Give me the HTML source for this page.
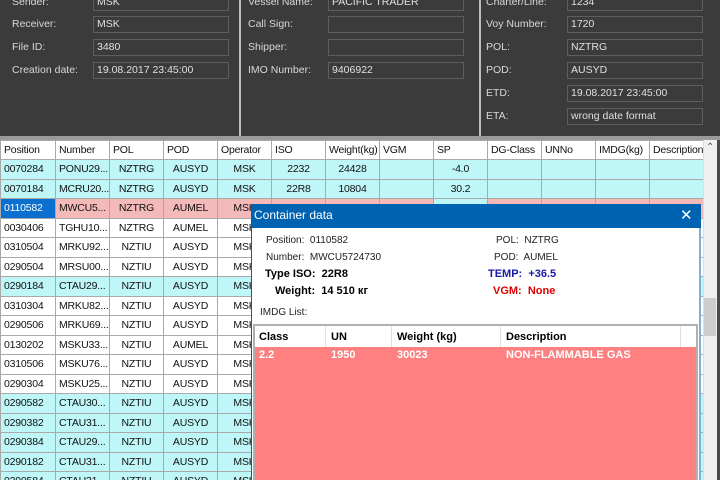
<!DOCTYPE html>
<html><head><meta charset="utf-8"><style>
*{margin:0;padding:0;box-sizing:border-box}
body{width:720px;height:480px;overflow:hidden;background:#3b3b3b;font-family:"Liberation Sans",Arial,sans-serif;font-size:11px;position:relative}
.a{position:absolute}
.lb{position:absolute;color:#d8d8d8;font-size:10.5px}
.in{position:absolute;border:1px solid #5e5e5e;height:17px;color:#e0e0e0;padding-left:3px;line-height:14px;font-size:10.5px}
table{border-collapse:collapse;table-layout:fixed}
#g td{border:1px solid #a9a9a9;height:19.5px;padding:0 3px;white-space:nowrap;overflow:hidden;color:#111;font-size:10.5px;letter-spacing:-0.2px}
#g tr.h td{background:#fff;height:19px}
.c td{background:#bff7f8}
.p td{background:#f4b9b9}
.w td{background:#fff}
.ct{text-align:center}.r{text-align:right}
</style></head><body>
<div class="a" style="left:239px;top:0;width:2px;height:137px;background:#bdbdbd"></div>
<div class="a" style="left:479px;top:0;width:2px;height:137px;background:#bdbdbd"></div>
<div class="a" style="left:0;top:136px;width:720px;height:4px;background:#9a9a9a"></div>

<div class="lb" style="left:12px;top:-4px">Sender:</div><div class="in" style="left:93px;top:-6px;width:136px">MSK</div>
<div class="lb" style="left:12px;top:18px">Receiver:</div><div class="in" style="left:93px;top:16px;width:136px">MSK</div>
<div class="lb" style="left:12px;top:41px">File ID:</div><div class="in" style="left:93px;top:39px;width:136px">3480</div>
<div class="lb" style="left:12px;top:64px">Creation date:</div><div class="in" style="left:93px;top:62px;width:136px">19.08.2017 23:45:00</div>

<div class="lb" style="left:248px;top:-4px">Vessel Name:</div><div class="in" style="left:328px;top:-6px;width:136px">PACIFIC TRADER</div>
<div class="lb" style="left:248px;top:18px">Call Sign:</div><div class="in" style="left:328px;top:16px;width:136px"></div>
<div class="lb" style="left:248px;top:41px">Shipper:</div><div class="in" style="left:328px;top:39px;width:136px"></div>
<div class="lb" style="left:248px;top:64px">IMO Number:</div><div class="in" style="left:328px;top:62px;width:136px">9406922</div>

<div class="lb" style="left:486px;top:-4px">Charter/Line:</div><div class="in" style="left:567px;top:-6px;width:136px">1234</div>
<div class="lb" style="left:486px;top:18px">Voy Number:</div><div class="in" style="left:567px;top:16px;width:136px">1720</div>
<div class="lb" style="left:486px;top:41px">POL:</div><div class="in" style="left:567px;top:39px;width:136px">NZTRG</div>
<div class="lb" style="left:486px;top:64px">POD:</div><div class="in" style="left:567px;top:62px;width:136px">AUSYD</div>
<div class="lb" style="left:486px;top:87px">ETD:</div><div class="in" style="left:567px;top:85px;width:136px">19.08.2017 23:45:00</div>
<div class="lb" style="left:486px;top:110px">ETA:</div><div class="in" style="left:567px;top:108px;width:136px">wrong date format</div>

<div class="a" style="left:0;top:140px;width:717px;height:340px;background:#fff;overflow:hidden">
<table id="g" style="width:703px">
<colgroup><col style="width:55px"><col style="width:54px"><col style="width:54px"><col style="width:54px"><col style="width:54px"><col style="width:54px"><col style="width:54px"><col style="width:54px"><col style="width:54px"><col style="width:54px"><col style="width:54px"><col style="width:54px"><col style="width:55px"></colgroup>
<tr class="h"><td>Position</td><td>Number</td><td>POL</td><td>POD</td><td>Operator</td><td>ISO</td><td>Weight(kg)</td><td>VGM</td><td>SP</td><td>DG-Class</td><td>UNNo</td><td>IMDG(kg)</td><td>Description</td></tr>
<tr class="c"><td>0070284</td><td>PONU29...</td><td class="ct">NZTRG</td><td class="ct">AUSYD</td><td class="ct">MSK</td><td class="ct">2232</td><td class="ct">24428</td><td></td><td class="ct">-4.0</td><td></td><td></td><td></td><td></td></tr>
<tr class="c"><td>0070184</td><td>MCRU20...</td><td class="ct">NZTRG</td><td class="ct">AUSYD</td><td class="ct">MSK</td><td class="ct">22R8</td><td class="ct">10804</td><td></td><td class="ct">30.2</td><td></td><td></td><td></td><td></td></tr>
<tr class="p"><td style="background:#0a6fcf;color:#fff">0110582</td><td>MWCU5...</td><td class="ct">NZTRG</td><td class="ct">AUMEL</td><td class="ct">MSK</td><td class="ct">22R8</td><td class="ct">14510</td><td></td><td class="ct" style="background:#bff7f8">36.5</td><td class="ct">2.2</td><td class="ct">1950</td><td class="ct">30023</td><td>NON-FL</td></tr>
<tr class="w"><td>0030406</td><td>TGHU10...</td><td class="ct">NZTRG</td><td class="ct">AUMEL</td><td class="ct">MSK</td><td></td><td></td><td></td><td></td><td></td><td></td><td></td><td></td></tr>
<tr class="w"><td>0310504</td><td>MRKU92...</td><td class="ct">NZTIU</td><td class="ct">AUSYD</td><td class="ct">MSK</td><td></td><td></td><td></td><td></td><td></td><td></td><td></td><td></td></tr>
<tr class="w"><td>0290504</td><td>MRSU00...</td><td class="ct">NZTIU</td><td class="ct">AUSYD</td><td class="ct">MSK</td><td></td><td></td><td></td><td></td><td></td><td></td><td></td><td></td></tr>
<tr class="c"><td>0290184</td><td>CTAU29...</td><td class="ct">NZTIU</td><td class="ct">AUSYD</td><td class="ct">MSK</td><td></td><td></td><td></td><td></td><td></td><td></td><td></td><td></td></tr>
<tr class="w"><td>0310304</td><td>MRKU82...</td><td class="ct">NZTIU</td><td class="ct">AUSYD</td><td class="ct">MSK</td><td></td><td></td><td></td><td></td><td></td><td></td><td></td><td></td></tr>
<tr class="w"><td>0290506</td><td>MRKU69...</td><td class="ct">NZTIU</td><td class="ct">AUSYD</td><td class="ct">MSK</td><td></td><td></td><td></td><td></td><td></td><td></td><td></td><td></td></tr>
<tr class="w"><td>0130202</td><td>MSKU33...</td><td class="ct">NZTIU</td><td class="ct">AUMEL</td><td class="ct">MSK</td><td></td><td></td><td></td><td></td><td></td><td></td><td></td><td></td></tr>
<tr class="w"><td>0310506</td><td>MSKU76...</td><td class="ct">NZTIU</td><td class="ct">AUSYD</td><td class="ct">MSK</td><td></td><td></td><td></td><td></td><td></td><td></td><td></td><td></td></tr>
<tr class="w"><td>0290304</td><td>MSKU25...</td><td class="ct">NZTIU</td><td class="ct">AUSYD</td><td class="ct">MSK</td><td></td><td></td><td></td><td></td><td></td><td></td><td></td><td></td></tr>
<tr class="c"><td>0290582</td><td>CTAU30...</td><td class="ct">NZTIU</td><td class="ct">AUSYD</td><td class="ct">MSK</td><td></td><td></td><td></td><td></td><td></td><td></td><td></td><td></td></tr>
<tr class="c"><td>0290382</td><td>CTAU31...</td><td class="ct">NZTIU</td><td class="ct">AUSYD</td><td class="ct">MSK</td><td></td><td></td><td></td><td></td><td></td><td></td><td></td><td></td></tr>
<tr class="c"><td>0290384</td><td>CTAU29...</td><td class="ct">NZTIU</td><td class="ct">AUSYD</td><td class="ct">MSK</td><td></td><td></td><td></td><td></td><td></td><td></td><td></td><td></td></tr>
<tr class="c"><td>0290182</td><td>CTAU31...</td><td class="ct">NZTIU</td><td class="ct">AUSYD</td><td class="ct">MSK</td><td></td><td></td><td></td><td></td><td></td><td></td><td></td><td></td></tr>
<tr class="c"><td>0290584</td><td>CTAU31...</td><td class="ct">NZTIU</td><td class="ct">AUSYD</td><td class="ct">MSK</td><td></td><td></td><td></td><td></td><td></td><td></td><td></td><td></td></tr>
</table>
<div class="a" style="left:703px;top:0;width:14px;height:340px;background:#f0f0f0;border-left:1px solid #ddd"></div>
<div class="a" style="left:706px;top:2px;color:#555;font-size:10px">&#8963;</div>
<div class="a" style="left:704px;top:158px;width:12px;height:38px;background:#cdcdcd"></div>
</div>
<div class="a" style="left:717px;top:140px;width:3px;height:340px;background:#4a4a4a"></div>

<div class="a" style="left:251px;top:204px;width:450px;height:276px;background:#fff;border:1px solid #0063b1;border-bottom:none"></div>
<div class="a" style="left:251px;top:204px;width:450px;height:24px;background:#0063b1;color:#fff;font-size:12px;line-height:23px;padding-left:3px">Container data</div>
<div class="a" style="left:680px;top:205px;color:#fff;font-size:15px;line-height:22px">&#10005;</div>
<div class="a" style="left:699px;top:228px;width:2px;height:252px;background:#7fb0d8"></div>

<div class="a" style="left:266px;top:235px;color:#222;font-size:10px">Position:&nbsp; 0110582</div>
<div class="a" style="left:266px;top:252px;color:#222;font-size:10px">Number:&nbsp; MWCU5724730</div>
<div class="a" style="left:265px;top:268px;color:#000;font-size:11px;font-weight:bold">Type ISO:&nbsp; 22R8</div>
<div class="a" style="left:275px;top:285px;color:#000;font-size:11px;font-weight:bold">Weight:&nbsp; 14 510 кг</div>
<div class="a" style="left:496px;top:235px;color:#222;font-size:10px">POL:&nbsp; NZTRG</div>
<div class="a" style="left:494px;top:252px;color:#222;font-size:10px">POD:&nbsp; AUMEL</div>
<div class="a" style="left:488px;top:268px;color:#1a1aa8;font-size:11px;font-weight:bold">TEMP:&nbsp; +36.5</div>
<div class="a" style="left:493px;top:285px;color:#e00000;font-size:11px;font-weight:bold">VGM:&nbsp; None</div>
<div class="a" style="left:260px;top:307px;color:#222;font-size:10px">IMDG List:</div>

<div class="a" style="left:253px;top:324px;width:445px;height:156px;background:#ff8080;border:2px solid #b0b0b0;border-bottom:none"></div>
<div class="a" style="left:255px;top:326px;width:441px;height:21px;background:#fff"></div>
<div class="a" style="left:325px;top:326px;width:1px;height:21px;background:#e0e0e0"></div>
<div class="a" style="left:391px;top:326px;width:1px;height:21px;background:#e0e0e0"></div>
<div class="a" style="left:500px;top:326px;width:1px;height:21px;background:#e0e0e0"></div>
<div class="a" style="left:680px;top:326px;width:1px;height:21px;background:#e0e0e0"></div>
<div class="a" style="left:259px;top:331px;font-weight:bold;font-size:11px;color:#000">Class</div>
<div class="a" style="left:331px;top:331px;font-weight:bold;font-size:11px;color:#000">UN</div>
<div class="a" style="left:397px;top:331px;font-weight:bold;font-size:11px;color:#000">Weight (kg)</div>
<div class="a" style="left:506px;top:331px;font-weight:bold;font-size:11px;color:#000">Description</div>
<div class="a" style="left:259px;top:349px;font-weight:bold;font-size:11px;color:#fff">2.2</div>
<div class="a" style="left:331px;top:349px;font-weight:bold;font-size:11px;color:#fff">1950</div>
<div class="a" style="left:397px;top:349px;font-weight:bold;font-size:11px;color:#fff">30023</div>
<div class="a" style="left:506px;top:349px;font-weight:bold;font-size:11px;color:#fff">NON-FLAMMABLE GAS</div>
</body></html>
